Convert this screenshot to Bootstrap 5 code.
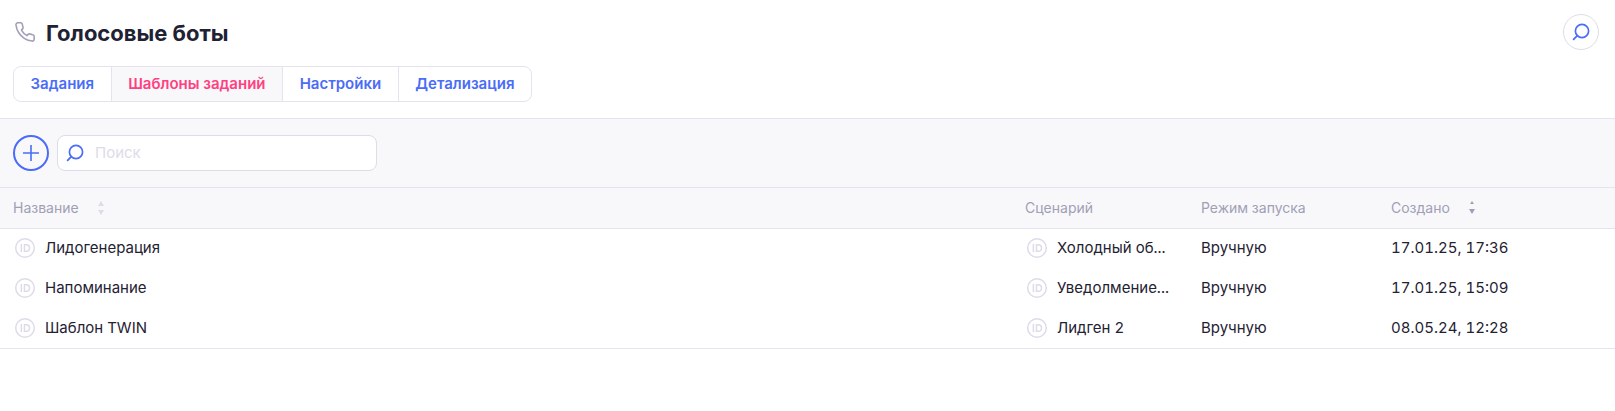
<!DOCTYPE html>
<html lang="ru">
<head>
<meta charset="utf-8">
<meta name="viewport" content="width=device-width, initial-scale=1">
<title>Голосовые боты</title>
<link href="https://cdn.jsdelivr.net/npm/bootstrap@5.3.0/dist/css/bootstrap.min.css" rel="stylesheet">
<style>
  :root { --line: #e4e3ef; --panel: #f8f8fb; --blue: #4a6cf7; --pink: #ff4081; --muted: #a19fb5; --pale: #dddce8; --ink: #1f2233; }
  body { font-family: Inter, "Noto Sans", sans-serif; font-size: 15px; line-height: 20px; color: var(--ink); background: #fff; }
  .page-head { padding: 14px 16px 16px 13px; border-bottom: 1px solid var(--line); }
  .page-title { font-size: 22px; line-height: 24px; font-weight: 700; padding-top: 2px; }
  .head-icon { width: 22px; height: 22px; margin: 0 10px 0 1px; }
  .round-btn { width: 36px; height: 36px; border-radius: 50%; border: 1px solid var(--pale); background: #fff; color: var(--blue); }
  .round-btn.add { border: 2px solid var(--blue); background: transparent; }
  .tabs { width: 519px; max-width: 100%; border: 1px solid var(--line); border-radius: 8px; overflow: hidden; margin-top: 16px; height: 36px; }
  .tabs a { flex: 1 0 auto; text-align: center; padding: 7px 15px; color: var(--blue); font-weight: 600; text-decoration: none; }
  .tabs a + a { border-left: 1px solid var(--line); }
  .tabs a.current { color: var(--pink); background: var(--panel); }
  .toolbar { padding: 16px 13px; background: var(--panel); border-bottom: 1px solid var(--line); }
  .search-box { width: 320px; height: 36px; border: 1px solid var(--pale); border-radius: 8px; background: #fff; padding: 0 8px; color: var(--blue); }
  .search-box input { font-size: 15px; line-height: 20px; padding: 0; margin-left: 11px; color: var(--ink); outline: 0; }
  .search-box input::placeholder { color: var(--pale); opacity: 1; }
  .bots { table-layout: fixed; border-collapse: separate; border-spacing: 0; font-variant-numeric: tabular-nums; }
  .bots th, .bots td { height: 40px; padding: 0 0 2px 13px; vertical-align: middle; white-space: nowrap; }
  .bots thead th { height: 41px; padding-bottom: 0; font-weight: 400; font-size: 14px; color: var(--muted); background: var(--panel); border-bottom: 1px solid var(--line); }
  .bots tbody tr:last-child td { padding-bottom: 1px; border-bottom: 1px solid var(--line); }
  .col-script { width: 176px; } .col-mode { width: 190px; } .col-date { width: 237px; }
  .cell { gap: 9px; }
  .id-mark { width: 22px; height: 22px; color: var(--pale); flex: none; margin-left: 1px; }
  .sort { border: 0; background: none; padding: 0; color: inherit; gap: 18px; }
</style>
</head>
<body>
<svg class="d-none" aria-hidden="true">
  <symbol id="lens" viewBox="0 0 18 18"><g fill="none" stroke="currentColor" stroke-linecap="round"><circle cx="10" cy="8" r="6.6" stroke-width="1.7"/><path d="M5.3 12.7 1.6 16.4" stroke-width="1.8"/></g></symbol>
  <symbol id="id" viewBox="0 0 22 22"><g fill="none" stroke="currentColor" stroke-width="1.5"><circle cx="11" cy="11" r="9.3"/><path d="M7.4 7v8M10.5 7.7v6.6h1.7a3.3 3.3 0 0 0 0-6.6z"/></g></symbol>
</svg>
<header class="page-head">
  <div class="d-flex align-items-center justify-content-between">
    <div class="d-flex align-items-center">
      <svg class="head-icon" viewBox="0 0 24 24" fill="none" stroke="#a19fb5" stroke-width="1.7" stroke-linecap="round" stroke-linejoin="round" aria-hidden="true"><path d="M22 16.92v3a2 2 0 0 1-2.18 2 19.79 19.79 0 0 1-8.63-3.07 19.5 19.5 0 0 1-6-6 19.79 19.79 0 0 1-3.07-8.67A2 2 0 0 1 4.11 2h3a2 2 0 0 1 2 1.72c.13.96.36 1.9.7 2.81a2 2 0 0 1-.45 2.11L8.09 9.91a16 16 0 0 0 6 6l1.27-1.27a2 2 0 0 1 2.11-.45c.91.34 1.85.57 2.81.7A2 2 0 0 1 22 16.92z"/></svg>
      <h1 class="page-title mb-0">Голосовые боты</h1>
    </div>
    <button class="round-btn d-flex align-items-center justify-content-center p-0" type="button" aria-label="Найти"><svg width="18" height="18"><use href="#lens"/></svg></button>
  </div>
  <nav class="tabs d-flex">
    <a href="#">Задания</a><a href="#" class="current" aria-current="page">Шаблоны заданий</a><a href="#">Настройки</a><a href="#">Детализация</a>
  </nav>
</header>
<main>
  <div class="toolbar d-flex align-items-center gap-2">
    <button class="round-btn add d-flex align-items-center justify-content-center p-0" type="button" aria-label="Добавить"><svg width="16" height="16" viewBox="0 0 16 16" stroke="currentColor" stroke-width="1.6"><path d="M8 0v16M0 8h16"/></svg></button>
    <label class="search-box d-flex align-items-center"><svg class="flex-shrink-0" width="18" height="18"><use href="#lens"/></svg><input class="border-0 bg-transparent flex-grow-1" type="text" placeholder="Поиск" aria-label="Поиск"></label>
  </div>
  <table class="bots w-100">
    <colgroup><col><col class="col-script"><col class="col-mode"><col class="col-date"></colgroup>
    <thead><tr>
      <th scope="col"><button class="sort d-flex align-items-center" type="button">Название<svg width="8" height="14" viewBox="0 0 8 14" fill="#dddce8"><path d="M1 5 4 0l3 5zM1 9h6l-3 5z"/></svg></button></th>
      <th scope="col">Сценарий</th>
      <th scope="col">Режим запуска</th>
      <th scope="col"><button class="sort d-flex align-items-center" type="button">Создано<svg width="8" height="14" viewBox="0 0 8 14" fill="#a19fb5"><path d="M2 3 4 0l2 3zM1 8h6l-3 5z"/></svg></button></th>
    </tr></thead>
    <tbody>
      <tr><td><div class="cell d-flex align-items-center"><svg class="id-mark"><use href="#id"/></svg>Лидогенерация</div></td><td><div class="cell d-flex align-items-center"><svg class="id-mark"><use href="#id"/></svg>Холодный об...</div></td><td>Вручную</td><td>17.01.25, 17:36</td></tr>
      <tr><td><div class="cell d-flex align-items-center"><svg class="id-mark"><use href="#id"/></svg>Напоминание</div></td><td><div class="cell d-flex align-items-center"><svg class="id-mark"><use href="#id"/></svg>Уведолмение...</div></td><td>Вручную</td><td>17.01.25, 15:09</td></tr>
      <tr><td><div class="cell d-flex align-items-center"><svg class="id-mark"><use href="#id"/></svg>Шаблон TWIN</div></td><td><div class="cell d-flex align-items-center"><svg class="id-mark"><use href="#id"/></svg>Лидген 2</div></td><td>Вручную</td><td>08.05.24, 12:28</td></tr>
    </tbody>
  </table>
</main>
<script src="https://cdn.jsdelivr.net/npm/bootstrap@5.3.0/dist/js/bootstrap.bundle.min.js"></script>
</body>
</html>
